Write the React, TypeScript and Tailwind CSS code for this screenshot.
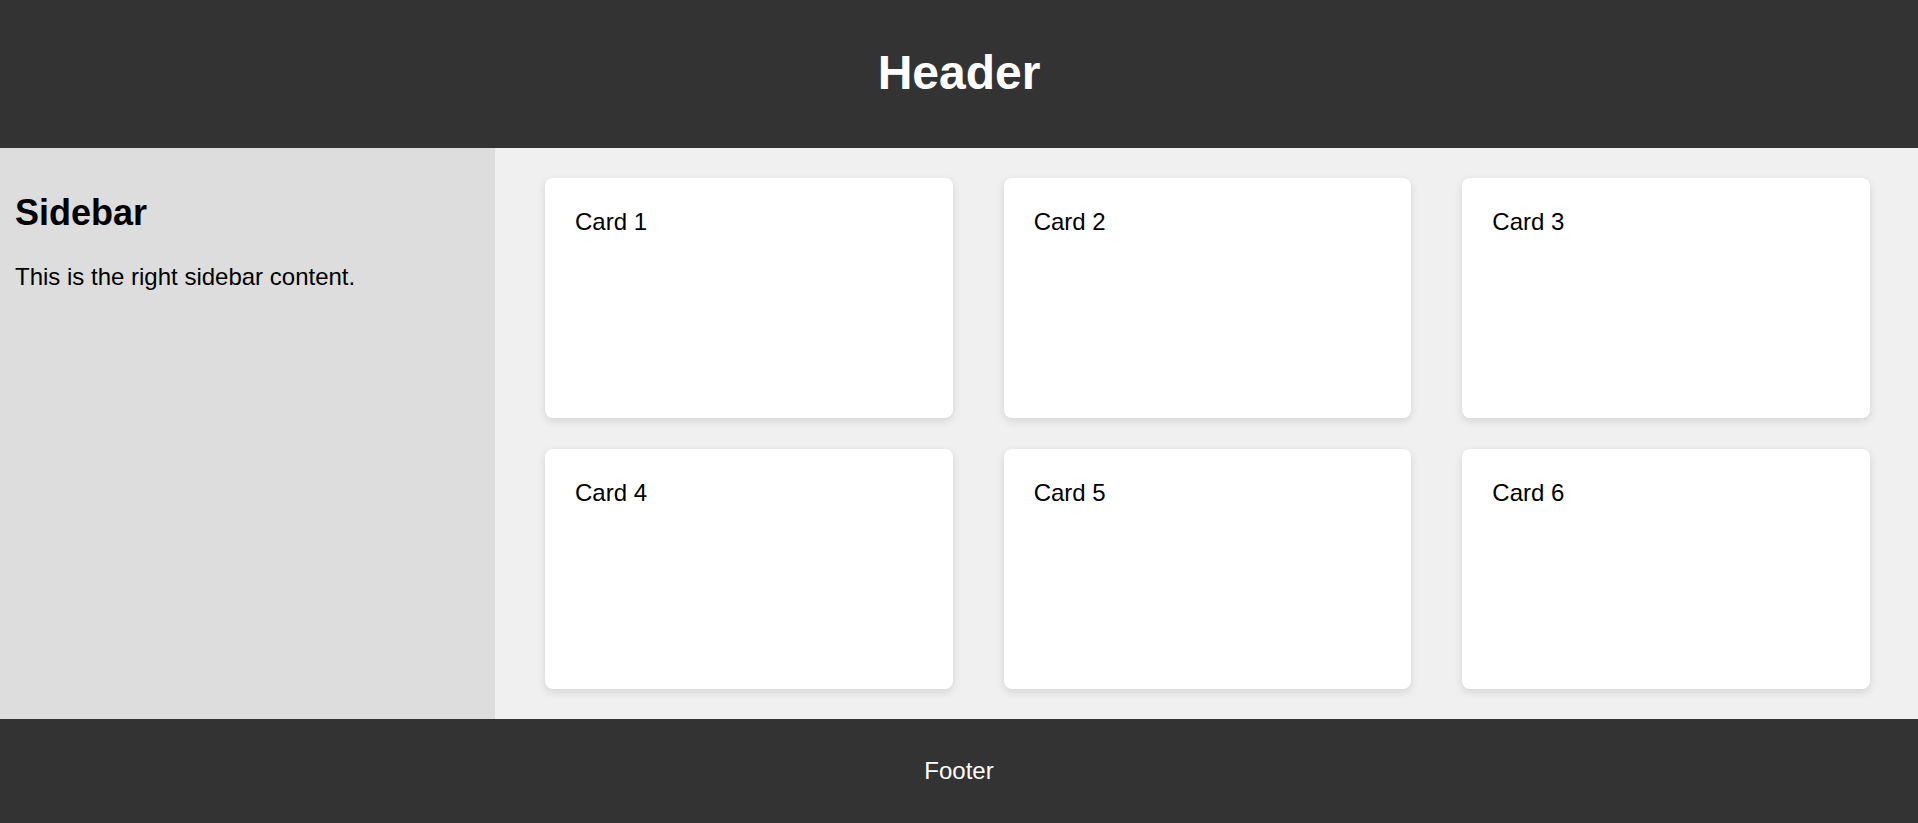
const cards = ['Card 1', 'Card 2', 'Card 3', 'Card 4', 'Card 5', 'Card 6']

export default function App() {
  return (
    <div className="h-screen flex flex-col font-['Liberation_Sans',Arial,sans-serif] text-black">
      <header className="h-[148px] shrink-0 bg-[#333333] flex items-center justify-center pb-[4px]">
        <h1 className="text-[48px] font-bold text-white leading-[55px]">Header</h1>
      </header>

      <div className="flex-1 flex min-h-0">
        <aside className="w-[495px] shrink-0 bg-[#dddddd] px-[15px] pt-[13px]">
          <h2 className="text-[36px] font-bold leading-[41px] mt-[31px]">Sidebar</h2>
          <p className="text-[24px] leading-[28px] mt-[30px]">
            This is the right sidebar content.
          </p>
        </aside>

        <main className="flex-1 bg-[#f0f0f0] pl-[50px] pr-[48px] pt-[30px] pb-[30px] grid grid-cols-3 grid-rows-2 gap-x-[51px] gap-y-[31px]">
          {cards.map((c) => (
            <div
              key={c}
              className="bg-white rounded-[8px] shadow-[0_3px_9px_rgba(0,0,0,0.12)] px-[30px] pt-[32px]"
            >
              <p className="text-[24px] leading-[24px]">{c}</p>
            </div>
          ))}
        </main>
      </div>

      <footer className="h-[104px] shrink-0 bg-[#333333] flex items-center justify-center">
        <p className="text-[24px] text-white leading-[28px]">Footer</p>
      </footer>
    </div>
  )
}
